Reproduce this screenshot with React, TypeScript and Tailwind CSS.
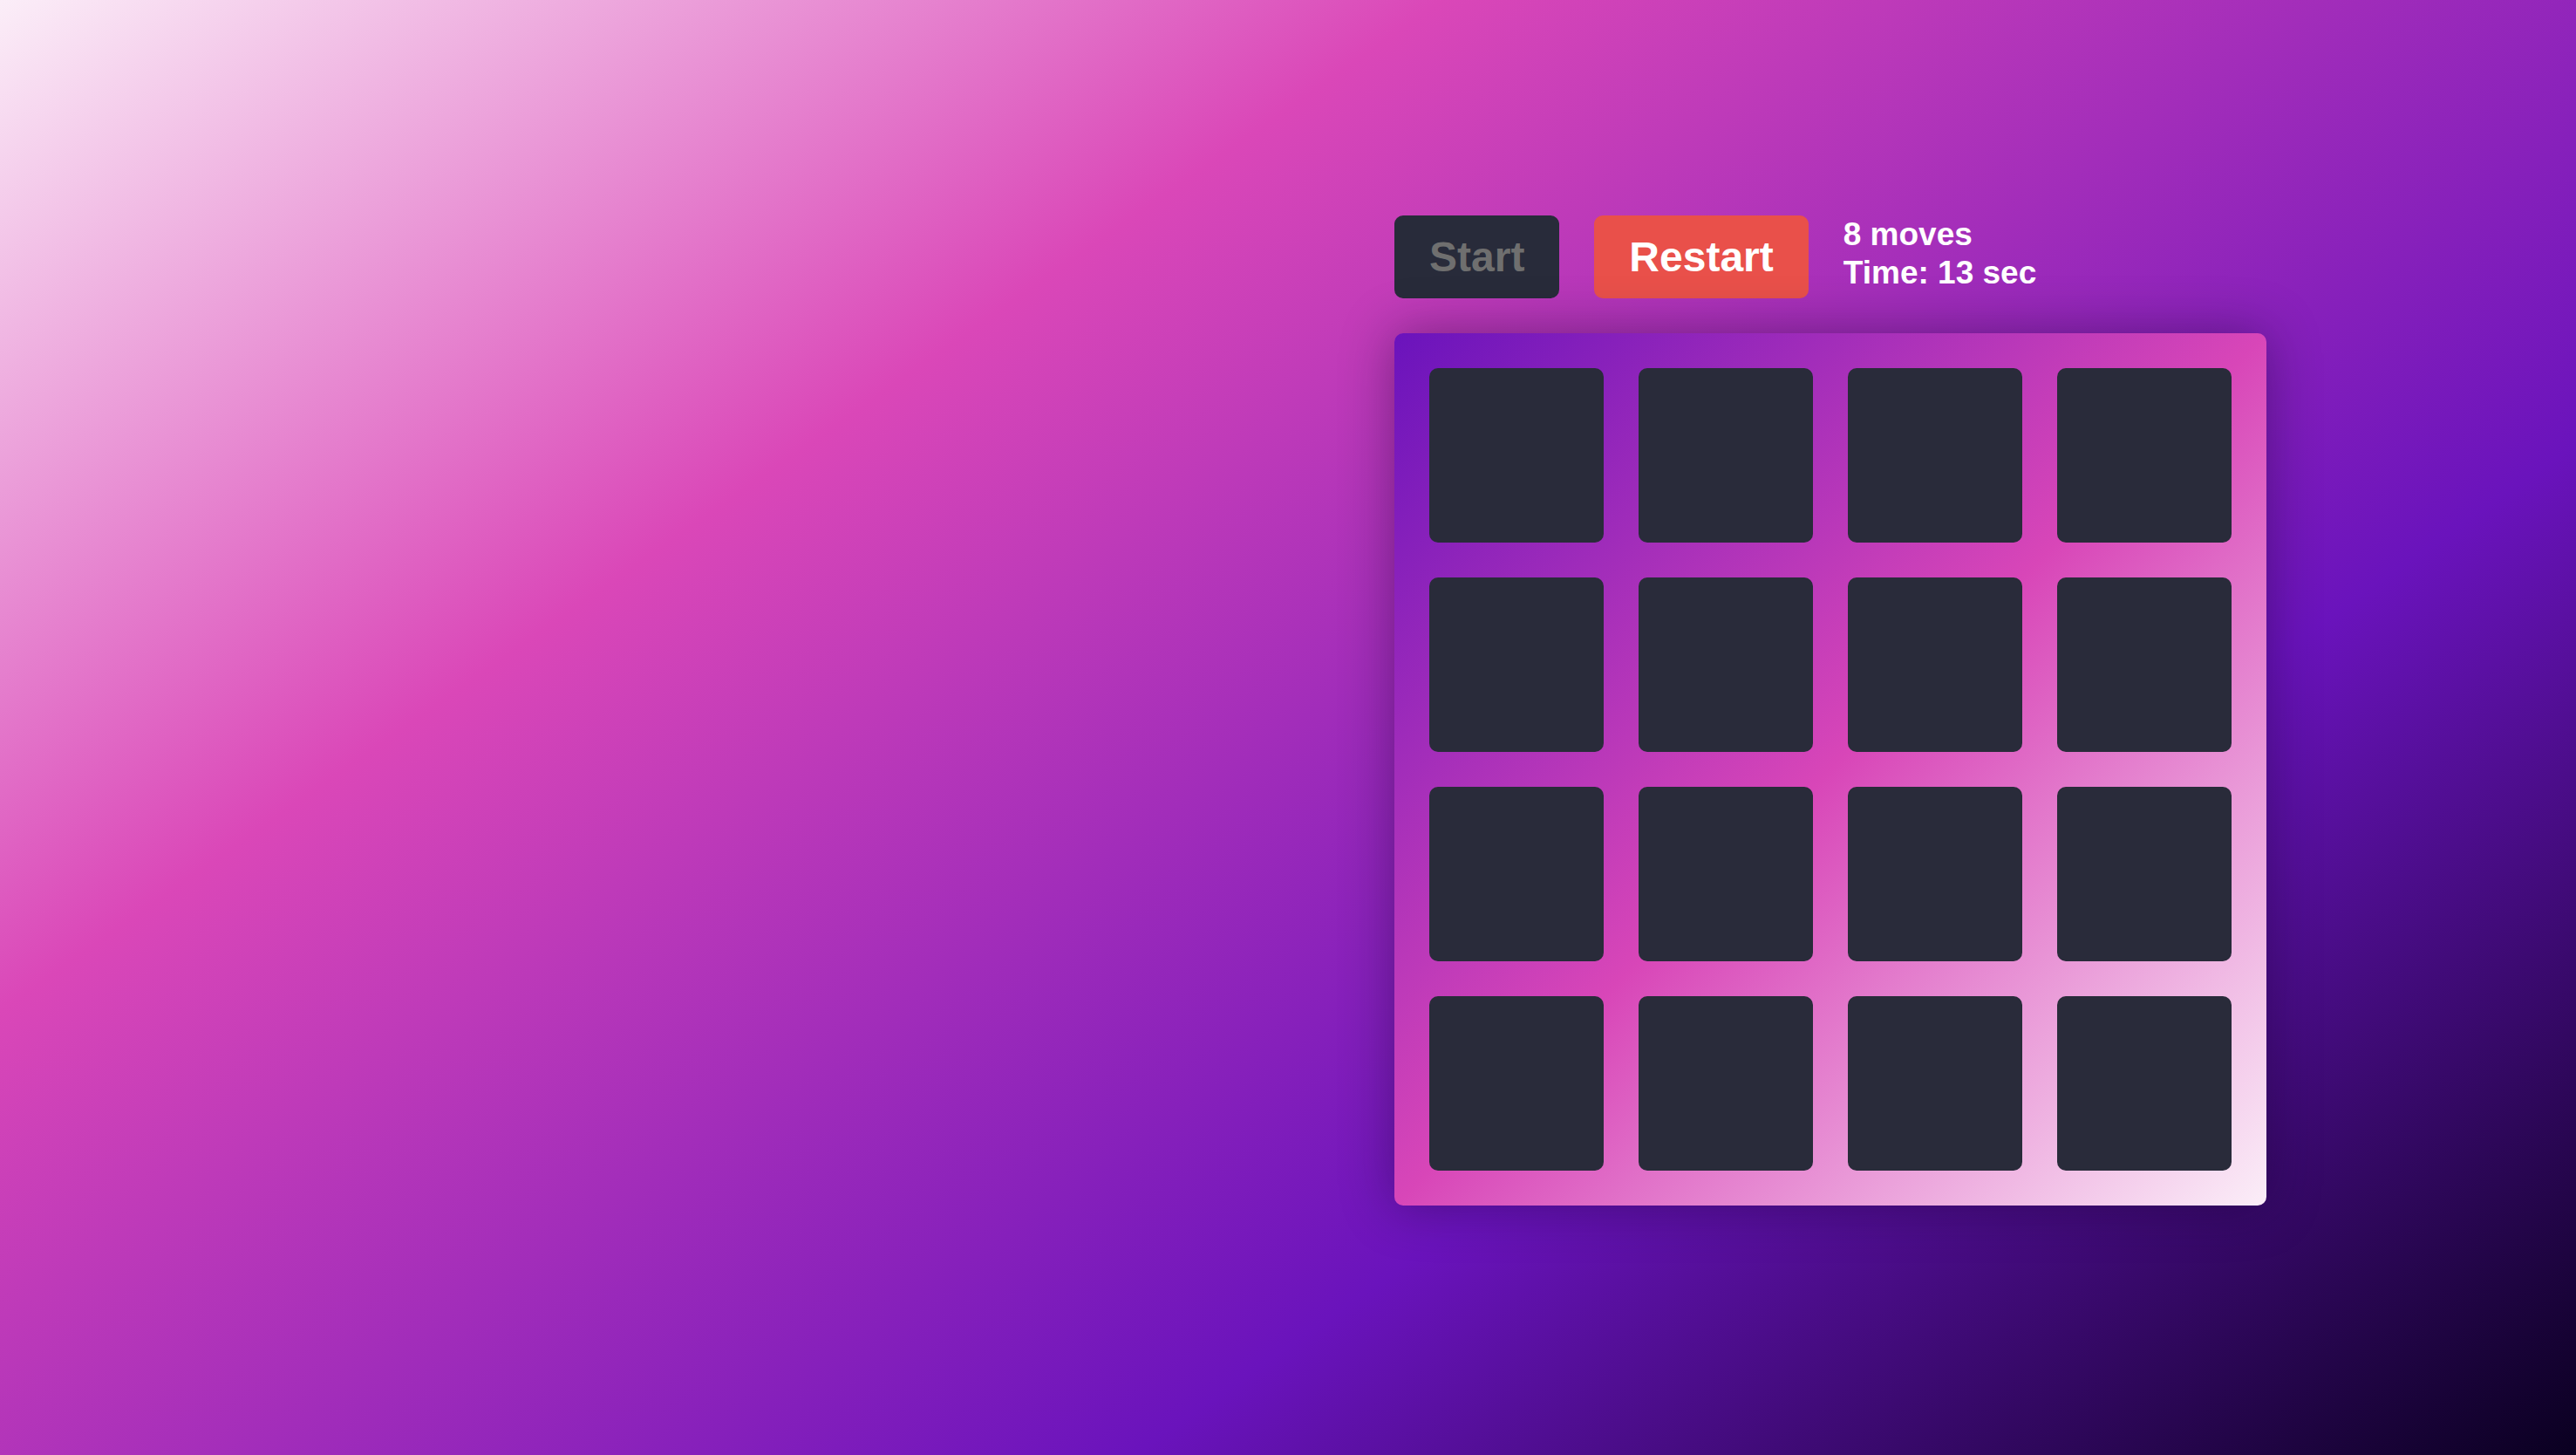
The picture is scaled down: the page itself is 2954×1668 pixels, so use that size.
import React from "react";

export default function App() {
  const tiles = Array.from({ length: 16 }, (_, i) => i);
  return (
    <div
      className="min-h-screen w-full overflow-hidden bg-[linear-gradient(145deg,#fbeef8_0%,#da47b8_31%,#6a13bc_69%,#0a0020_100%)] pl-[1599px] pt-[247px] font-['Liberation_Sans',Arial,sans-serif]"
      style={{ height: 1668 }}
    >
      <div className="flex flex-col gap-[40px]">
        <div className="flex items-start gap-[40px]">
          <button className="rounded-[10px] bg-[#282b3a] px-[40px] py-[20px] font-['Liberation_Sans',Arial,sans-serif] text-[48px] font-bold leading-[55px] text-[#6f6f6f]">
            Start
          </button>
          <button className="rounded-[10px] bg-[#e9504a] px-[40px] py-[20px] font-['Liberation_Sans',Arial,sans-serif] text-[48px] font-bold leading-[55px] text-white">
            Restart
          </button>
          <div className="flex flex-col text-[37px] font-bold leading-[44px] text-white">
            <span>8 moves</span>
            <span>Time: 13 sec</span>
          </div>
        </div>
        <div className="grid w-[1000px] grid-cols-4 gap-[40px] rounded-[10px] bg-[linear-gradient(135deg,#6a13bc_0%,#d846b8_50%,#fbeef8_100%)] p-[40px] shadow-[0_0_60px_rgba(20,0,40,0.4)]">
          {tiles.map((t) => (
            <div key={t} className="h-[200px] w-[200px] rounded-[10px] bg-[#292b3a]" />
          ))}
        </div>
      </div>
    </div>
  );
}
